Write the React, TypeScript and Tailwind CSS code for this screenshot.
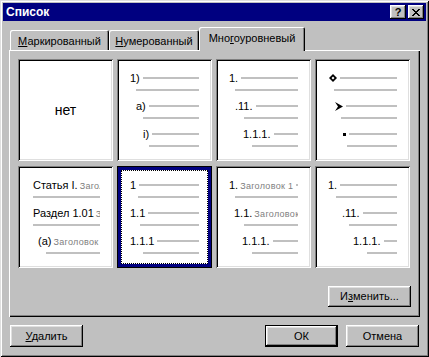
import type { ReactNode } from "react";

const raised =
  "shadow-[inset_-1px_-1px_0_#000,inset_1px_1px_0_#fff,inset_-2px_-2px_0_#808080,inset_2px_2px_0_#dfdfdf]";
const sunken =
  "shadow-[inset_1px_1px_0_#808080,inset_-1px_-1px_0_#fff,inset_2px_2px_0_#000,inset_-2px_-2px_0_#dfdfdf]";

interface Level {
  label: ReactNode;
  a: string;
  b: string;
  line?: boolean;
}

const Gray = ({ children }: { children: ReactNode }) => (
  <span className="ml-[2px] text-[9px] tracking-[0.3px] text-[#808080]">{children}</span>
);

const Diamond = () => (
  <svg width="8" height="8" viewBox="0 0 8 8" className="shrink-0">
    <path d="M4 0L8 4L4 8L0 4Z M4 2.5L5.5 4L4 5.5L2.5 4Z" fillRule="evenodd" fill="#000" />
  </svg>
);

const Arrow = () => (
  <svg width="8" height="9" viewBox="0 0 8 9" className="shrink-0">
    <path d="M0 0L8 4.5L0 9L3 4.5Z" fill="#000" />
  </svg>
);

const cells: { levels: Level[] }[] = [
  {
    levels: [
      { label: "1)", a: "pl-0", b: "pl-[6px]" },
      { label: "a)", a: "pl-[6px]", b: "pl-[13px]" },
      { label: "i)", a: "pl-[13px]", b: "pl-[19px]" },
    ],
  },
  {
    levels: [
      { label: "1.", a: "pl-0", b: "pl-[6px]" },
      { label: ".11.", a: "pl-[6px]", b: "pl-[15px]" },
      { label: "1.1.1.", a: "pl-[14px]", b: "pl-[23px]" },
    ],
  },
  {
    levels: [
      { label: <Diamond />, a: "pl-px", b: "pl-[6px]" },
      { label: <Arrow />, a: "pl-[7px]", b: "pl-[13px]" },
      { label: <span className="block size-[3px] bg-black" />, a: "pl-[15px]", b: "pl-[19px]" },
    ],
  },
  {
    levels: [
      {
        label: (
          <>
            Статья I.<Gray>Заголовок 1</Gray>
          </>
        ),
        a: "pl-[2px]",
        b: "pl-[2px]",
        line: false,
      },
      {
        label: (
          <>
            Раздел 1.01<Gray>Заголовок 2</Gray>
          </>
        ),
        a: "pl-[2px]",
        b: "pl-[2px]",
        line: false,
      },
      {
        label: (
          <>
            (a)<Gray>Заголовок 3</Gray>
          </>
        ),
        a: "pl-[7px]",
        b: "pl-[15px]",
        line: false,
      },
    ],
  },
  {
    levels: [
      { label: "1", a: "pl-0", b: "pl-[8px]" },
      { label: "1.1", a: "pl-0", b: "pl-[10px]" },
      { label: "1.1.1", a: "pl-0", b: "pl-[13px]" },
    ],
  },
  {
    levels: [
      {
        label: (
          <>
            1.<Gray>Заголовок 1</Gray>
          </>
        ),
        a: "pl-0",
        b: "pl-[6px]",
      },
      {
        label: (
          <>
            1.1.<Gray>Заголовок</Gray>
          </>
        ),
        a: "pl-[5px]",
        b: "pl-[15px]",
        line: false,
      },
      { label: "1.1.1.", a: "pl-[13px]", b: "pl-[23px]" },
    ],
  },
  {
    levels: [
      { label: "1.", a: "pl-0", b: "pl-[8px]" },
      { label: ".11.", a: "pl-[14px]", b: "pl-[21px]" },
      { label: "1.1.1.", a: "pl-[25px]", b: "pl-[39px]" },
    ],
  },
];

const Levels = ({ levels }: { levels: Level[] }) => (
  <div className="flex flex-col">
    {levels.map((lvl, i) => (
      <div key={i} className="flex h-[28px] flex-col">
        <div className={`flex h-[16px] items-center gap-[3px] overflow-hidden whitespace-nowrap ${lvl.a}`}>
          <span className="flex shrink-0 items-baseline leading-none">{lvl.label}</span>
          {lvl.line !== false ? <div className="h-[2px] min-w-0 flex-1 bg-[#c0c0c0]" /> : null}
        </div>
        <div className={`flex h-[8px] items-center ${lvl.b}`}>
          <div className="h-[2px] flex-1 bg-[#c0c0c0]" />
        </div>
      </div>
    ))}
  </div>
);

const Button = ({ children, def, className }: { children: ReactNode; def?: boolean; className?: string }) => (
  <div className={`h-[22px] ${def ? "border border-black" : ""} ${className ?? ""}`}>
    <div className={`flex h-full w-full items-center justify-center bg-[#c0c0c0] ${raised}`}>{children}</div>
  </div>
);

export default function App() {
  return (
    <div className="flex h-[357px] w-[429px] flex-col bg-[#c0c0c0] p-[3px] font-['Liberation_Sans',Arial,sans-serif] text-[11px] text-black shadow-[inset_1px_1px_0_#dfdfdf,inset_-1px_-1px_0_#000,inset_2px_2px_0_#fff,inset_-2px_-2px_0_#808080]">
      {/* title bar */}
      <div className="flex h-[18px] shrink-0 items-center justify-between bg-[#000080] pl-[3px] pr-[2px]">
        <span className="text-[12px] font-bold text-white">Список</span>
        <div className="flex gap-[2px]">
          <div className={`flex h-[14px] w-[16px] items-center justify-center bg-[#c0c0c0] ${raised}`}>
            <span className="text-[11px] font-bold leading-none">?</span>
          </div>
          <div className={`flex h-[14px] w-[16px] items-center justify-center bg-[#c0c0c0] ${raised}`}>
            <svg width="8" height="7" viewBox="0 0 8 7" shapeRendering="crispEdges">
              <path d="M0 0h2v1h-2z M6 0h2v1h-2z M1 1h2v1h-2z M5 1h2v1h-2z M2 2h4v1h-4z M3 3h2v1h-2z M2 4h4v1h-4z M1 5h2v1h-2z M5 5h2v1h-2z M0 6h2v1h-2z M6 6h2v1h-2z" fill="#000" />
            </svg>
          </div>
        </div>
      </div>

      <div className="flex flex-1 flex-col px-[6px] pt-[6px]">
        {/* tabs */}
        <div className="flex h-[23px] items-end pl-px">
          <div className="flex h-[20px] w-[99px] items-center justify-center rounded-t-[2px] pt-[2px] shadow-[inset_1px_1px_0_#fff,inset_-1px_0_0_#000,inset_-2px_0_0_#808080]">
            <span>
              <u>М</u>аркированный
            </span>
          </div>
          <div className="flex h-[20px] w-[90px] items-center justify-center rounded-t-[2px] pt-[2px] shadow-[inset_1px_1px_0_#fff,inset_-1px_0_0_#000,inset_-2px_0_0_#808080]">
            <span>
              <u>Н</u>умерованный
            </span>
          </div>
          <div className="relative z-10 -mb-px flex h-[24px] w-[106px] items-center justify-center rounded-t-[2px] bg-[#c0c0c0] pb-[2px] shadow-[inset_1px_1px_0_#fff,inset_-1px_0_0_#000,inset_-2px_0_0_#808080]">
            <span>
              Мно<u>г</u>оуровневый
            </span>
          </div>
        </div>

        {/* panel */}
        <div className="flex h-[267px] flex-col pl-[9px] pr-[9px] pt-[9px] shadow-[inset_1px_1px_0_#fff,inset_-1px_-1px_0_#000,inset_-2px_-2px_0_#808080]">
          <div className="grid grid-cols-[repeat(4,95px)] gap-x-[4px] gap-y-[5px]">
            <div className={`flex h-[102px] items-center justify-center bg-white ${sunken}`}>
              <span className="text-[14px]">нет</span>
            </div>
            {cells.map((cell, i) =>
              i === 4 ? (
                <div key={i} className="h-[102px] border border-black bg-white">
                  <div className="h-full border-[3px] border-[#000080]">
                    <div className="h-full overflow-hidden border border-dotted border-black px-[8px] pt-[6px]">
                      <Levels levels={cell.levels} />
                    </div>
                  </div>
                </div>
              ) : (
                <div key={i} className={`h-[102px] bg-white p-[2px] ${sunken}`}>
                  <div className="h-full overflow-hidden px-[11px] pt-[9px]">
                    <Levels levels={cell.levels} />
                  </div>
                </div>
              ),
            )}
          </div>
          <div className="mt-[18px] flex justify-end">
            <Button className="w-[83px] !h-[21px]">
              <span>
                И<u>з</u>менить...
              </span>
            </Button>
          </div>
        </div>

        {/* bottom buttons */}
        <div className="mt-[8px] flex items-center px-px">
          <Button className="w-[73px]">
            <span>
              <u>У</u>далить
            </span>
          </Button>
          <div className="flex-1" />
          <Button def className="w-[73px]">
            <span>ОК</span>
          </Button>
          <Button className="ml-[8px] w-[73px]">
            <span>Отмена</span>
          </Button>
        </div>
      </div>
    </div>
  );
}
